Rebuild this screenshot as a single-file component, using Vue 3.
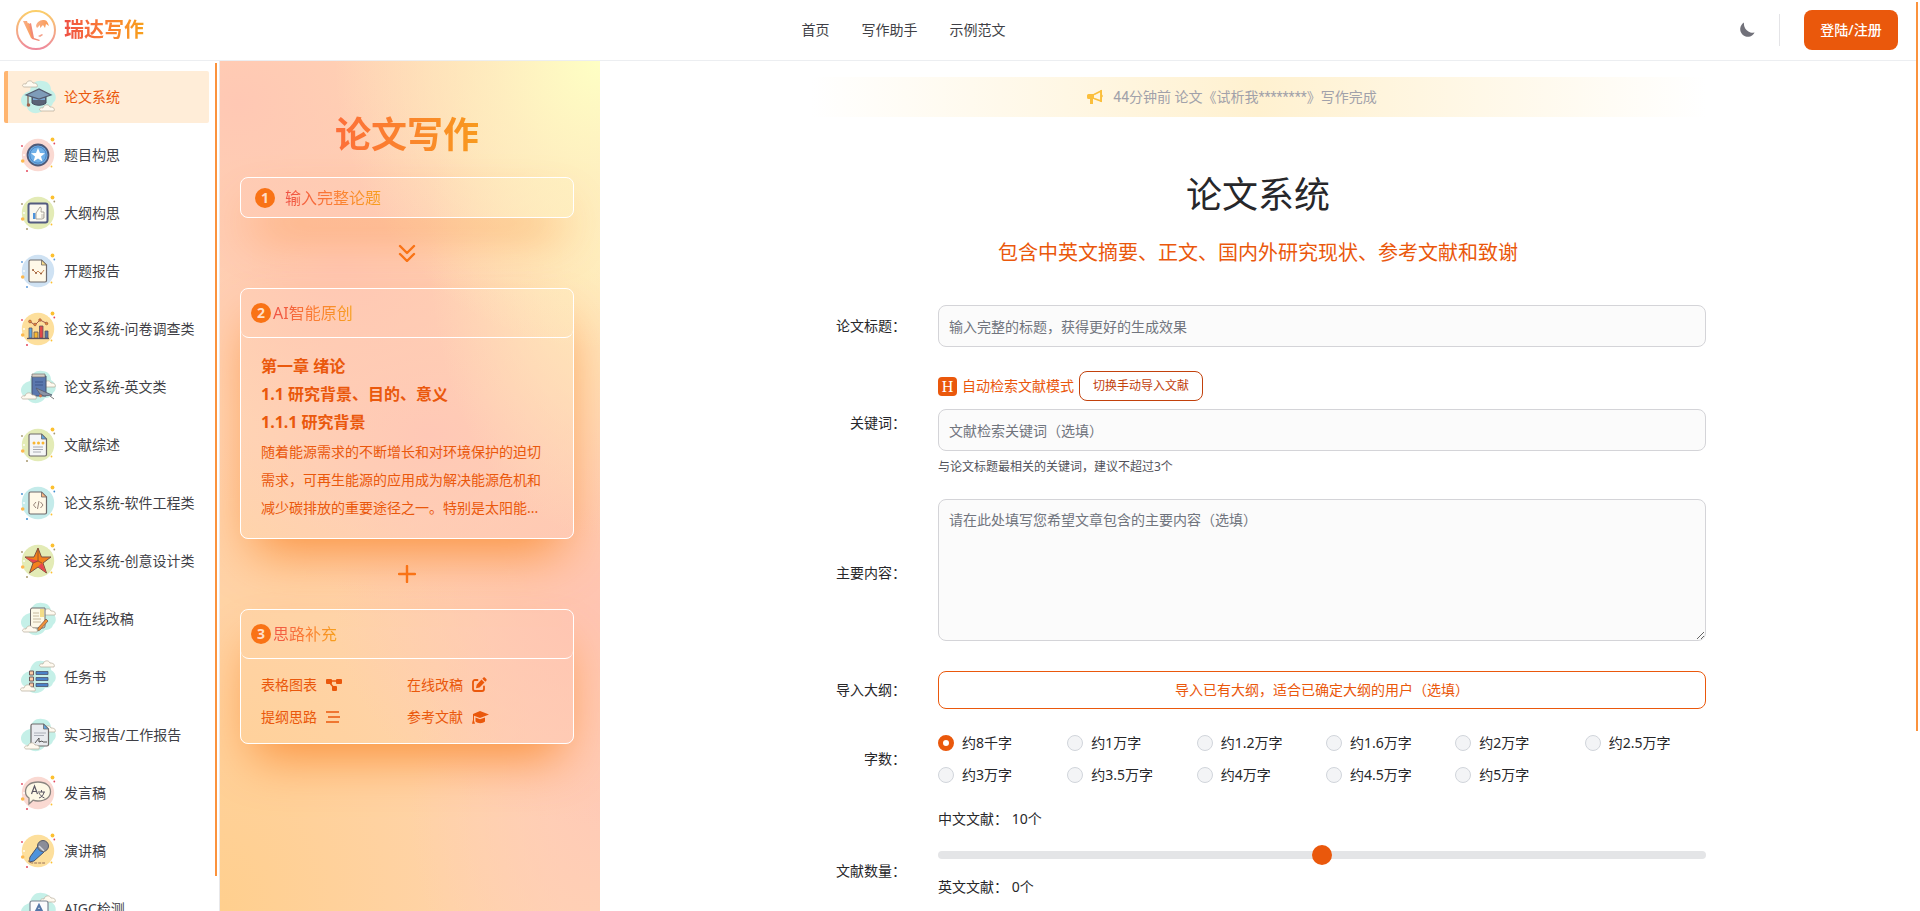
<template>
  <div class="page">
    <header class="topbar">
      <a class="brand" href="#">
        <svg class="brand-logo" viewBox="0 0 40 40">
          <defs>
            <linearGradient id="ring" x1="0" y1="0" x2="0" y2="1">
              <stop offset="0" stop-color="#fbcf6a" />
              <stop offset="1" stop-color="#ee8a9c" />
            </linearGradient>
            <linearGradient id="quill" x1="0" y1="0" x2="1" y2="0">
              <stop offset="0" stop-color="#f8b08a" />
              <stop offset="1" stop-color="#fb9a52" />
            </linearGradient>
          </defs>
          <circle cx="20" cy="20" r="19" fill="#fff" stroke="url(#ring)" stroke-width="2" />
          <path d="M7 11l4 0 6 18-2-1zM10 14l3-1 4 15z" fill="url(#quill)" />
          <path d="M13 14l2-1 3 15 6 2-1 1-7-2z" fill="#f28a75" />
          <path d="M20 16c1-5 5-6 8-6 3 0 4 3 5 6l-3-2-1 4-2-3-3 3 0-3-3 3z" fill="url(#quill)" />
          <path d="M22 26l4-2 1 1-3 2z" fill="#f4a08a" />
        </svg>
        <span class="brand-name">瑞达写作</span>
      </a>
      <nav class="topnav">
        <a href="#" v-for="n in navs" :key="n">{{ n }}</a>
      </nav>
      <div class="actions">
        <button class="theme" aria-label="theme">
          <svg viewBox="0 0 16 16" width="16" height="16">
            <path d="M5 .6A7.600 7.600 0 1 0 15.600 10.600 9 9 0 0 1 5 .6z" fill="#71717a" />
          </svg>
        </button>
        <span class="divider"></span>
        <button class="login">登陆/注册</button>
      </div>
    </header>

    <div class="body">
      <aside class="sidebar">
        <div class="menu">
          <a v-for="(m, i) in menus" :key="m.name" href="#" class="menu-item" :class="{ active: i === current }" @click.prevent="current = i">
            <svg class="menu-icon" viewBox="0 0 36 36" v-html="backs[m.back] + m.icon"></svg>
            <span>{{ m.name }}</span>
          </a>
        </div>
        <div class="thumb side-thumb"></div>
      </aside>

      <section class="guide">
        <h2>论文写作</h2>
        <div class="step step-one">
          <span class="badge">1</span>
          <span class="step-title">输入完整论题</span>
        </div>
        <svg class="join" viewBox="0 0 18 18">
          <path d="M2 2l7 7 7-7M2 10l7 7 7-7" />
        </svg>
        <div class="step">
          <div class="step-head">
            <span class="badge">2</span>
            <span class="step-title">AI智能原创</span>
          </div>
          <div class="outline">
            <h4>第一章 绪论</h4>
            <h4>1.1 研究背景、目的、意义</h4>
            <h4>1.1.1 研究背景</h4>
            <p>随着能源需求的不断增长和对环境保护的迫切需求，可再生能源的应用成为解决能源危机和减少碳排放的重要途径之一。特别是太阳能...</p>
          </div>
        </div>
        <svg class="join" viewBox="0 0 18 18">
          <path d="M9 1v16M1 9h16" />
        </svg>
        <div class="step">
          <div class="step-head">
            <span class="badge">3</span>
            <span class="step-title">思路补充</span>
          </div>
          <div class="extras">
            <span>表格图表
              <svg viewBox="0 0 18 16" width="18" height="16" fill="currentColor">
                <rect x="1" y="2" width="6" height="5" rx="1" /><rect x="11" y="2" width="6" height="5" rx="1" /><rect x="7" y="9" width="5" height="5" rx="1" />
                <path d="M6 4h6M5 6l4 5" stroke="currentColor" stroke-width="1.5" />
              </svg>
            </span>
            <span>在线改稿
              <svg viewBox="0 0 16 16" width="16" height="16">
                <path d="M6.500 3H4a2 2 0 0 0-2 2v7a2 2 0 0 0 2 2h7a2 2 0 0 0 2-2V9.500" fill="none" stroke="currentColor" stroke-width="1.8" stroke-linecap="round" />
                <path d="M10.500 2.500l3 3-5 5-3.500.800.700-3.500zM11.300 1.700l1-1c.5-.5 1.200-.5 1.700 0l1.300 1.300c.5.5.5 1.200 0 1.700l-1 1z" fill="currentColor" />
              </svg>
            </span>
            <span>提纲思路
              <svg viewBox="0 0 16 16" width="16" height="16">
                <path d="M1 3h13M3 8h12M1 13h13" stroke="currentColor" stroke-width="1.600" />
              </svg>
            </span>
            <span>参考文献
              <svg viewBox="0 0 18 16" width="18" height="16" fill="currentColor">
                <path d="M9 2l9 3.500-9 3.500-6-2.300v5l1 3H1l1-4V5z" />
                <path d="M4.500 8.500L9 10.300l5-1.900v4c-2.500 2.300-7 2.300-9.500 0z" />
              </svg>
            </span>
          </div>
        </div>
      </section>

      <main class="content">
        <div class="inner">
          <div class="notice">
            <svg viewBox="0 0 16 16" width="16" height="16">
              <path d="M7 5.500l7-3.500v10L7 9.500" fill="none" stroke="#fbbf3c" stroke-width="1.600" />
              <path d="M1.500 5H7v5H6v5H3v-5H1.500A1.500 1.500 0 0 1 0 8.500v-2A1.500 1.500 0 0 1 1.500 5zM13.300 1H15v4.500l1 1.500-1 1.500V13h-1.700z" fill="#fbbf3c" />
            </svg>
            <span>44分钟前 论文《试析我********》写作完成</span>
          </div>
          <h1>论文系统</h1>
          <p class="subtitle">包含中英文摘要、正文、国内外研究现状、参考文献和致谢</p>

          <form class="form" @submit.prevent>
            <label class="label" for="title">论文标题：</label>
            <input id="title" v-model="title" class="field" type="text" placeholder="输入完整的标题，获得更好的生成效果">

            <label class="label" for="keywords">关键词：</label>
            <div>
              <div class="mode">
                <span class="mode-icon">H</span>
                <span class="mode-name">自动检索文献模式</span>
                <button type="button" class="switch">切换手动导入文献</button>
              </div>
              <input id="keywords" v-model="keywords" class="field" type="text" placeholder="文献检索关键词（选填）">
              <p class="hint">与论文标题最相关的关键词，建议不超过3个</p>
            </div>

            <label class="label" for="detail">主要内容：</label>
            <div class="area">
              <textarea id="detail" v-model="detail" class="field" placeholder="请在此处填写您希望文章包含的主要内容（选填）"></textarea>
            </div>

            <label class="label" for="import">导入大纲：</label>
            <button id="import" type="button" class="import">导入已有大纲，适合已确定大纲的用户（选填）</button>

            <span class="label" id="count">字数：</span>
            <div class="radios" role="radiogroup" aria-labelledby="count">
              <label v-for="c in counts" :key="c">
                <input v-model="count" type="radio" name="count" :value="c">
                <span>{{ c }}</span>
              </label>
            </div>

            <span class="label">文献数量：</span>
            <div class="ranges">
              <label for="zh">中文文献： {{ zh }}个</label>
              <input id="zh" v-model="zh" type="range" min="0" max="20">
              <label for="en">英文文献： {{ en }}个</label>
              <input id="en" v-model="en" type="range" min="0" max="20">
            </div>
          </form>
        </div>
      </main>
    </div>
    <div class="thumb page-thumb"></div>
  </div>
</template>

<script setup>
import { ref } from 'vue';

const navs = ['首页', '写作助手', '示例范文'];
const current = ref(0);
const title = ref('');
const keywords = ref('');
const detail = ref('');
const counts = ['约8千字', '约1万字', '约1.2万字', '约1.6万字', '约2万字', '约2.5万字', '约3万字', '约3.5万字', '约4万字', '约4.5万字', '约5万字'];
const count = ref('约8千字');
const zh = ref(10);
const en = ref(0);

// 图标底图
const round = (fill, dot) => `<circle cx="18" cy="18" r="16.200" fill="${fill}"/>
  <circle cx="32.500" cy="2.500" r="1.900" fill="#fcc030"/><circle cx="2.700" cy="24" r="1.800" fill="#fdb94e"/>
  <circle cx="31.500" cy="29.500" r=".9" fill="#fcc030"/><circle cx="34.300" cy="6.500" r=".9" fill="${dot}"/>
  <circle cx="2" cy="9" r=".9" fill="${dot}"/><circle cx="7" cy="34" r="1" fill="${dot}"/>
  <circle cx="4" cy="18" r=".9" fill="#fff"/><circle cx="29" cy="5" r=".8" fill="#fff"/>`;
const backs = {
  pink: round('#fad9d2', '#e5485d'),
  green: round('#e3ebb6', '#a8996e'),
  blue: round('#cfe2f3', '#5d9bdc'),
  yellow: round('#fddf9c', '#e5485d'),
  teal: round('#c4ebea', '#3d8ed0'),
  blob: '<path d="M10 12C11 4 17 1 22 2c6 0 9 4 9 9 6 3 6 10 2 13-1 4-5 5-8 5-4 7-16 7-18-1-8-1-9-13 3-16z" fill="#c5f0e8"/>'
};

const cloud = (x, y) => `<path transform="translate(${x} ${y})" d="M1 6c-3-1-1-4 2-3 1-4 6-4 7-1 4 0 5 2 4 4z" fill="#fffaf0" stroke="#b5aa9a" stroke-width=".7"/>`;
const paper = (fill, fold) => `<path d="M10.500 7h11l5 5v15.500q0 1.500-1.500 1.500h-14.500q-1.500 0-1.500-1.500v-19q0-1.500 1.500-1.500z" fill="${fill}" stroke="#6f6a6a" stroke-width="1.200"/><path d="M21.500 7v5h5z" fill="${fold}" stroke="#6f6a6a" stroke-width=".8"/>`;

const menus = [
  { name: '论文系统', back: 'blob', icon: cloud(3, 2) + '<path d="M12 17h14v7c-3 3-11 3-14 0z" fill="#5b6477" stroke="#474e60"/><path d="M13 20h12" stroke="#7aa5d0" stroke-width="2"/><path d="M6 16l13-6 12 6-12 4z" fill="#7e9cb9" stroke="#545c70" stroke-width="1.200"/><path d="M8 17v8" stroke="#805c4d" stroke-width="1.200"/><circle cx="8.500" cy="26" r="1.800" fill="#a5634b"/>' + cloud(20, 26) },
  { name: '题目构思', back: 'pink', icon: '<circle cx="18" cy="18" r="10.500" fill="#6fb0e8" stroke="#4f5a78" stroke-width="1.800"/><circle cx="18" cy="18" r="8.200" fill="none" stroke="#4b83c2"/><path d="M18 11l2 5 5 .3-4 3.200 1.500 5-4.500-3-4.500 3 1.500-5-4-3.200 5-.3z" fill="#fff"/>' },
  { name: '大纲构思', back: 'green', icon: '<rect x="8.500" y="8.500" width="19" height="19" rx="2" fill="#faf8f0" stroke="#535b80" stroke-width="2"/><rect x="13" y="18" width="2.500" height="6" fill="#4e94dc"/><path d="M16 18l4-6c2 0 1 3 1 5h3v6l-2 1h-6z" fill="#fffdf2" stroke="#9a938a" stroke-width=".8"/><path d="M21 20h3M21 22h3" stroke="#9a938a" stroke-width=".6"/>' },
  { name: '开题报告', back: 'blue', icon: paper('#fff9e8', '#f7dc8a') + '<path d="M13 17l3 3 2-2 3 3 3-4" fill="none" stroke="#c98a58"/><circle cx="13" cy="17" r="1" fill="#9a5c3a"/><circle cx="16" cy="20" r="1" fill="#9a5c3a"/><circle cx="21" cy="20.500" r="1" fill="#9a5c3a"/>' },
  { name: '论文系统-问卷调查类', back: 'yellow', icon: '<path d="M7 27.500h22" stroke="#5d5360" stroke-width="1.300"/><g stroke="#5d5360" stroke-width=".8"><path d="M9 17h3v10H9z" fill="#5ba7e0"/><path d="M14 21h4v6h-4z" fill="#f5b72d"/><path d="M19.500 15h3.500v12h-3.500z" fill="#e34848"/><path d="M25 20h3v7h-3z" fill="#5577a8"/></g><path d="M9 10l6 4 5-5 8 4" fill="none" stroke="#a4574b"/><g fill="#e88a30" stroke="#8f4a3f" stroke-width=".6"><circle cx="10" cy="10.500" r="1.400"/><circle cx="15" cy="13.500" r="1.300"/><circle cx="20" cy="9" r="1.300"/><circle cx="26.500" cy="12.500" r="1.300"/></g>' },
  { name: '论文系统-英文类', back: 'blob', icon: cloud(21, 12) + '<path d="M12 7h14v20H12z" fill="#5b78ae" stroke="#4b536c"/><path d="M12 5h13v3H12z" fill="#d5d0c8" stroke="#77716e" stroke-width=".7"/><path d="M15 13h8M15 16h8" stroke="#3f568b"/><path d="M16 19l16 7-8 1-4-2z" fill="#8b95a6" stroke="#555c6e" stroke-width=".8"/><circle cx="20.500" cy="27" r="1.400" fill="#dd7845"/><path d="M30 27l4 3" stroke="#777" />' + cloud(2, 24) },
  { name: '文献综述', back: 'green', icon: paper('#f5f6f7', '#60a5df') + '<g fill="#f9b630"><circle cx="14" cy="16" r="1.500"/><circle cx="18.500" cy="16" r="1.500"/><circle cx="23" cy="16" r="1.500"/></g><path d="M13 20h10M13 22.500h10M13 25h8" stroke="#a0a3a9" stroke-width=".9"/>' },
  { name: '论文系统-软件工程类', back: 'teal', icon: paper('#fff9e8', '#fcb680') + '<path d="M16 17l-2.500 3 2.500 3M20.500 17l2.500 3-2.500 3M19 16l-1.500 8" fill="none" stroke="#97857a"/>' },
  { name: '论文系统-创意设计类', back: 'green', icon: '<path d="M18 5l3.500 9h9.500l-8 6 3.500 10-8.500-6-8.500 6 3.500-10-8-6H14z" fill="#f2811d" stroke="#7d5144"/><path d="M5.500 14.500l14 3.500-6 2zM22 20l4 9.500-8-6-7 6z" fill="#e84552"/><path d="M18 5.500V18l4 2M13 20l5-2" stroke="#8a4a2b" stroke-width=".8" fill="none"/>' },
  { name: 'AI在线改稿', back: 'blob', icon: cloud(21, 8) + '<path d="M12 7h13v18q0 2-2 2H12q-1.500 0-1.500-2V9q0-2 1.500-2z" fill="#fdf9e8" stroke="#6f6a6a"/><path d="M20 8h4v8h-4z" fill="#f3dc87"/><path d="M13 12h6M13 15h6M13 18h8M13 21h8" stroke="#b9ab8d" stroke-width=".8"/><path d="M26 18l2 2-8 9-2.500 1 .5-3z" fill="#f0913a" stroke="#74523f" stroke-width=".7"/>' + cloud(3, 25) },
  { name: '任务书', back: 'blob', icon: cloud(20, 2) + '<g fill="#fbcba5" stroke="#725b5b"><path d="M9.500 12h4v4h-4zM9.500 18h4v4h-4zM9.500 24h4v4h-4z"/></g><g fill="#4a82c8" stroke="#4b536c" stroke-width=".8"><path d="M16 12.500h12v3H16zM16 18.500h12v3H16zM16 24.500h12v3H16z"/></g>' + cloud(1, 26) },
  { name: '实习报告/工作报告', back: 'blob', icon: cloud(21, 9) + '<g transform="translate(2 0)">' + paper('#e9ebef', '#60a5df') + '<path d="M12 16h12M12 18.500h10" stroke="#abafb8"/><path d="M13 26l4-5 0 4 3-1 1 1h4" fill="none" stroke="#555" /></g>' + cloud(5, 26) },
  { name: '发言稿', back: 'pink', icon: '<path d="M18 7c8 0 12.500 4 12.500 9.500S26 26 18 26c-2 0-3.500-.2-5-.8L9 29v-6c-2.500-1.500-3.500-4-3.500-6.500C5.500 11 10 7 18 7z" fill="#fdf8e6" stroke="#8a8580" stroke-width="1.300"/><path d="M11.500 19l3-8 3 8M12.500 16.500h4" fill="none" stroke="#5a5662" stroke-width="1.200"/><path d="M18 17h7M21.500 15v2M19 23c3-1 4.500-3 5-6M19 18c1 2 3 4 5.500 5" fill="none" stroke="#5a5662"/>' },
  { name: '演讲稿', back: 'yellow', icon: '<path d="M18 13l6 6-10 9-5 1 1-5z" fill="#4f93dc" stroke="#4b536c"/><circle cx="23" cy="13" r="5.500" fill="#8a8d98" stroke="#565a68"/><path d="M19 13l5 5" stroke="#d7dbe2" stroke-width="1.500"/><path d="M10 26c-2 3 0 4 3 4h12" fill="none" stroke="#97705a" stroke-dasharray="3 1"/>' },
  { name: 'AIGC检测', back: 'blob', icon: cloud(21, 5) + '<rect x="10" y="10" width="18" height="20" rx="2" fill="#fbfbfd" stroke="#7d8694" stroke-width="1.200"/><path d="M15 22l4-8 4 8M16 19h6" fill="none" stroke="#5577a8" stroke-width="2"/>' }
];
</script>

<style>
html, body { height: 100%; }
body { margin: 0; background: #fff; overflow: hidden; }
#app { height: 100%; }
</style>

<style scoped>
.page {
  position: relative; height: 100vh; box-sizing: border-box; padding-right: 4px; display: flex; flex-direction: column; overflow: hidden;
  font-family: "Noto Sans", "Noto Sans CJK SC", sans-serif; font-size: 14px; line-height: 20px; color: #27272a;
}
.page * { box-sizing: border-box; }
a { color: inherit; text-decoration: none; }
button, input, textarea { font: inherit; }
button { cursor: pointer; }
h1, h2, h4, p { margin: 0; }

/* 顶部 */
.topbar { display: flex; align-items: center; justify-content: space-between; height: 61px; flex: none; padding: 0 18px 0 16px; border-bottom: 1px solid #eceef1; }
.brand { display: flex; align-items: center; gap: 8px; }
.brand-logo { width: 40px; height: 40px; }
.brand-name { font-size: 20px; line-height: 28px; font-weight: 700; }
.brand-name, .step-title { background: linear-gradient(90deg, #ef5044, #fb7c35 50%, #f7a01c); -webkit-background-clip: text; background-clip: text; color: transparent; }
.topnav { display: flex; gap: 32px; color: #3f3f46; }
.actions { display: flex; align-items: center; justify-content: flex-end; gap: 24px; min-width: 235px; }
.theme { display: flex; padding: 0; border: 0; background: none; }
.divider { width: 1px; height: 32px; background: #e4e4e7; }
.login { height: 40px; min-width: 94px; padding: 0 16px; border: 0; border-radius: 8px; background: #ea580c; color: #fff; font-weight: 500; }

.body { display: flex; flex: 1; min-height: 0; }

/* 侧边菜单 */
.sidebar { position: relative; width: 220px; flex: none; border-right: 1px solid #e8e8ea; overflow: hidden; }
.menu { display: flex; flex-direction: column; gap: 6px; padding: 10px 10px 10px 4px; }
.menu-item { display: flex; align-items: center; gap: 8px; height: 52px; flex: none; padding-left: 12px; border-left: 4px solid transparent; border-radius: 2px; color: #3f3f46; white-space: nowrap; }
.menu-item.active { background: #ffedd8; border-left-color: #ffb570; color: #ea580c; }
.menu-icon { width: 36px; height: 36px; flex: none; }
.thumb { position: absolute; width: 2px; background: #fb923c; }
.side-thumb { top: 2px; right: 2px; bottom: 35px; }
.page-thumb { top: 2px; right: 2px; height: 80%; }

/* 写作步骤 */
.guide {
  width: 380px; flex: none; padding: 48px 26px 0 20px; overflow: hidden;
  display: flex; flex-direction: column; align-items: center;
  background:
    radial-gradient(70% 34% at 100% 0%, #feffc4 0, rgba(254, 243, 194, .75) 40%, rgba(254, 230, 190, 0) 100%),
    radial-gradient(45% 34% at 100% 22%, rgba(255, 236, 188, .9) 0, rgba(255, 226, 186, 0) 100%),
    radial-gradient(60% 22% at 5% 5%, #ffc8b4 0, rgba(255, 200, 180, 0) 100%),
    radial-gradient(60% 20% at 32% 24%, #ffc7b4 0, rgba(255, 199, 180, 0) 100%),
    radial-gradient(60% 20% at 55% 44%, #ffc8b6 0, rgba(255, 200, 182, 0) 100%),
    radial-gradient(70% 26% at 100% 64%, #ffc4b2 0, rgba(255, 196, 178, 0) 100%),
    radial-gradient(50% 30% at 100% 88%, #ffcbb6 0, rgba(255, 203, 182, 0) 100%),
    radial-gradient(90% 56% at 0% 100%, #ffcf8e 0, rgba(255, 209, 150, 0) 100%),
    #ffd5b3;
}
.guide h2 { margin-bottom: 16px; font-size: 36px; line-height: 52px; background: linear-gradient(90deg, #fd6e3a, #f89a1e); -webkit-background-clip: text; background-clip: text; color: transparent; }
.step { width: 100%; border: 1px solid #fff; border-radius: 8px; box-shadow: 0 25px 50px -12px #fb923c; color: #ea580c; }
.step-one { display: flex; align-items: center; gap: 10px; height: 41px; padding-left: 14px; }
.step-head { display: flex; align-items: center; gap: 2px; height: 49px; padding-left: 10px; border-bottom: 1px solid #fff; border-radius: 0 0 8px 8px; }
.badge { width: 20px; height: 20px; border-radius: 50%; background: #f97316; color: #ffdfc8; font-size: 14px; font-weight: 700; text-align: center; }
.step-title { font-size: 16px; line-height: 24px; }
.join { width: 18px; height: 18px; margin: 26px 0; flex: none; fill: none; stroke: #f97316; stroke-width: 2.4; stroke-linecap: round; stroke-linejoin: round; }
.outline { padding: 14px 20px 16px; line-height: 28px; }
.outline h4 { font-size: 16px; }
.outline p { margin-top: 2px; word-break: break-all; }
.extras { display: grid; grid-template-columns: 1fr 1fr; gap: 12px 0; padding: 16px 20px; }
.extras span { display: flex; align-items: center; gap: 8px; }

/* 表单 */
.content { flex: 1; min-width: 0; overflow: hidden; padding: 16px; }
.inner { max-width: 896px; margin: 0 auto; }
.notice { display: flex; align-items: center; justify-content: center; gap: 10px; height: 40px; padding-right: 52px; font-family: Roboto, "Noto Sans CJK SC", sans-serif; color: #a1a1aa; background: linear-gradient(90deg, rgba(255, 241, 208, 0), #fff1d0 50%, rgba(255, 241, 208, 0)); }
h1 { margin-top: 52px; font-size: 36px; line-height: 52px; font-weight: 400; text-align: center; }
.subtitle { margin-top: 18px; font-size: 20px; line-height: 28px; text-align: center; color: #ea580c; }
.form { display: grid; grid-template-columns: 96px 1fr; gap: 24px 32px; align-items: center; margin-top: 38px; }
.label { text-align: right; }
.field { display: block; width: 100%; height: 42px; padding: 10px; border: 1px solid #d4d4d8; border-radius: 8px; background: #fbfbfb; color: #27272a; outline: none; }
.field::placeholder { color: #71757e; }
.mode { display: flex; align-items: center; gap: 5px; height: 30px; margin-bottom: 8px; color: #ea580c; }
.mode-icon { width: 19px; height: 19px; border-radius: 4px; background: #ea580c; color: #fff; font: 16px/19px "Liberation Serif", serif; text-align: center; }
.switch { height: 30px; padding: 0 13px; border: 1px solid #c2410c; border-radius: 8px; background: #fff; color: #c2410c; font-size: 12px; }
.hint { margin-top: 8px; font-size: 12px; line-height: 16px; color: #52525b; }
.area { padding-bottom: 6px; }
.area .field { height: 142px; resize: vertical; }
.import { height: 38px; border: 1px solid #ea580c; border-radius: 8px; background: #fff; color: #ea580c; }
.radios { display: grid; grid-template-columns: repeat(6, 1fr); gap: 12px 8px; }
.radios label { display: flex; align-items: center; gap: 8px; white-space: nowrap; }
.radios input { appearance: none; width: 16px; height: 16px; margin: 0; flex: none; border: 1px solid #d1d5db; border-radius: 50%; background: #f3f4f6; }
.radios input:checked { border: 5px solid #ea580c; background: #fff; }
.ranges { display: flex; flex-direction: column; }
.ranges label { white-space: pre; }
.ranges input { appearance: none; width: 100%; height: 20px; margin: 16px 0 12px; background: none; }
.ranges input:last-child { margin-bottom: 0; }
.ranges input::-webkit-slider-runnable-track { height: 8px; border-radius: 8px; background: #e4e5e7; }
.ranges input::-webkit-slider-thumb { appearance: none; width: 20px; height: 20px; margin-top: -6px; border-radius: 50%; background: #ea580c; }
</style>
